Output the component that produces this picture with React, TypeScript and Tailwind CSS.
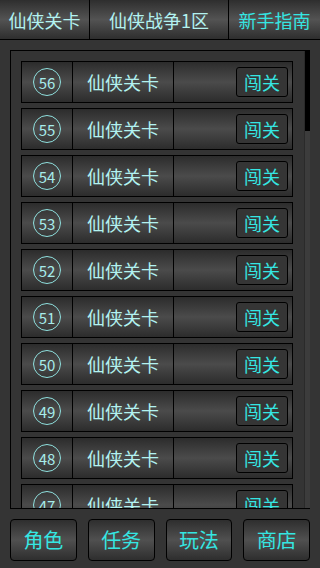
import React from 'react';

const levels = [56, 55, 54, 53, 52, 51, 50, 49, 48, 47];
const navItems = ['角色', '任务', '玩法', '商店'];

const cjk = "font-['Noto_Sans_CJK_SC','Noto_Sans',sans-serif]";

const App: React.FC = () => {
  return (
    <div className={`w-[320px] h-[568px] flex flex-col bg-[#343434] overflow-hidden ${cjk}`}>
      {/* Onglets du haut */}
      <div className="flex h-[40px] border-b border-black bg-[linear-gradient(to_bottom,#2e2e2e,#535353_50%,#2e2e2e)] text-[18px] leading-none">
        <div className="w-[90px] border-r border-black flex items-center justify-center text-[#b2f2f0]">仙侠关卡</div>
        <div className="w-[139px] border-r border-black flex items-center justify-center text-[#b2f2f0]">仙侠战争1区</div>
        <div className="flex-1 flex items-center justify-center text-[#35e6e2]">新手指南</div>
      </div>

      {/* Liste des niveaux */}
      <div className="mt-[10px] mx-[10px] flex-1 min-h-0 flex border-y border-l border-black">
        <div className="flex-1 min-w-0 overflow-hidden pl-[10px] pr-[11px] pt-[10px] flex flex-col gap-[5px]">
          {levels.map((n) => (
            <div
              key={n}
              className="shrink-0 h-[42px] flex border border-black bg-[linear-gradient(to_bottom,#2c2c2c,#4b4b4b_50%,#2c2c2c)]"
            >
              <div className="w-[51px] border-r border-black flex items-center justify-center">
                <div className="w-[28px] h-[28px] rounded-full border-[1.5px] border-[#8fe0de] flex items-center justify-center text-[15px] leading-none text-[#a6ecea]">
                  {n}
                </div>
              </div>
              <div className="w-[101px] border-r border-black flex items-center justify-center text-[18px] leading-none text-[#b2f2f0]">
                仙侠关卡
              </div>
              <div className="flex-1 flex items-center justify-end pr-[4px]">
                <div className="w-[52px] h-[30px] rounded-[3px] border border-black bg-[#353535] flex items-center justify-center text-[18px] leading-none text-[#35e6e2]">
                  闯关
                </div>
              </div>
            </div>
          ))}
        </div>
        <div className="w-[6px] bg-[#3c3c3c] border-l border-[#2a2a2a]">
          <div className="h-[80px] bg-black" />
        </div>
      </div>

      {/* Navigation du bas */}
      <div className="mt-[10px] mb-[7px] px-[10px] grid grid-cols-4 gap-[11px]">
        {navItems.map((label) => (
          <div
            key={label}
            className="h-[42px] rounded-[4px] border border-black bg-[linear-gradient(to_bottom,#2e2e2e,#505050_50%,#2e2e2e)] flex items-center justify-center text-[20px] leading-none text-[#35e6e2]"
          >
            {label}
          </div>
        ))}
      </div>
    </div>
  );
};

export default App;
